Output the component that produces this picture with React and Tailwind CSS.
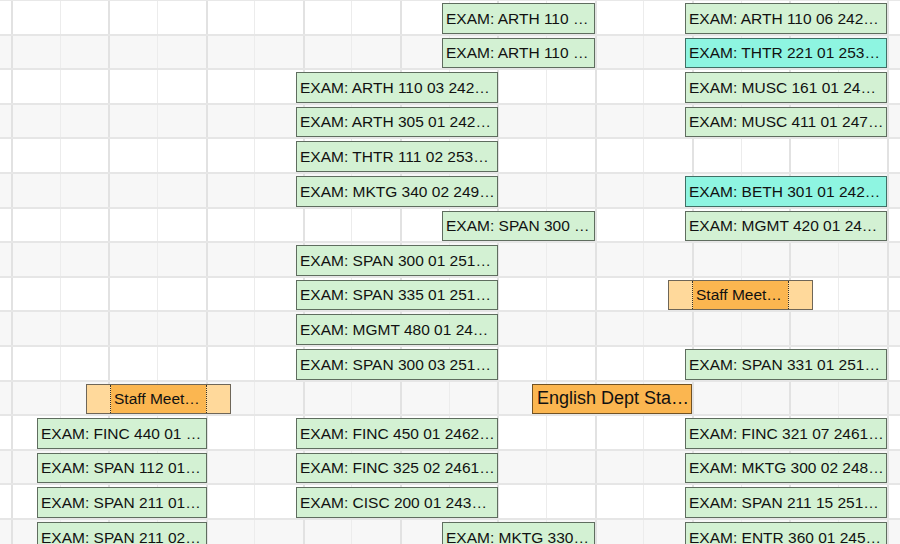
const COLS = 19;

// each row lists its events as [left, right, title, kind]
const rows = [
  [[442, 595, "EXAM: ARTH 110 …", "exam"], [685, 887, "EXAM: ARTH 110 06 242…", "exam"]],
  [[442, 595, "EXAM: ARTH 110 …", "exam"], [685, 887, "EXAM: THTR 221 01 253…", "theatre"]],
  [[296, 498, "EXAM: ARTH 110 03 242…", "exam"], [685, 887, "EXAM: MUSC 161 01 24…", "exam"]],
  [[296, 498, "EXAM: ARTH 305 01 242…", "exam"], [685, 887, "EXAM: MUSC 411 01 247…", "exam"]],
  [[296, 498, "EXAM: THTR 111 02 253…", "exam"]],
  [[296, 498, "EXAM: MKTG 340 02 249…", "exam"], [685, 887, "EXAM: BETH 301 01 242…", "theatre"]],
  [[442, 595, "EXAM: SPAN 300 …", "exam"], [685, 887, "EXAM: MGMT 420 01 24…", "exam"]],
  [[296, 498, "EXAM: SPAN 300 01 251…", "exam"]],
  [[296, 498, "EXAM: SPAN 335 01 251…", "exam"], [668, 813, "Staff Meet…", "meeting"]],
  [[296, 498, "EXAM: MGMT 480 01 24…", "exam"]],
  [[296, 498, "EXAM: SPAN 300 03 251…", "exam"], [685, 887, "EXAM: SPAN 331 01 251…", "exam"]],
  [[86, 231, "Staff Meet…", "meeting"], [532, 692, "English Dept Sta…", "dept"]],
  [[37, 207, "EXAM: FINC 440 01 …", "exam"], [296, 498, "EXAM: FINC 450 01 2462…", "exam"], [685, 887, "EXAM: FINC 321 07 2461…", "exam"]],
  [[37, 207, "EXAM: SPAN 112 01…", "exam"], [296, 498, "EXAM: FINC 325 02 2461…", "exam"], [685, 887, "EXAM: MKTG 300 02 248…", "exam"]],
  [[37, 207, "EXAM: SPAN 211 01…", "exam"], [296, 498, "EXAM: CISC 200 01 243…", "exam"], [685, 887, "EXAM: SPAN 211 15 251…", "exam"]],
  [[37, 207, "EXAM: SPAN 211 02…", "exam"], [442, 595, "EXAM: MKTG 330…", "exam"], [685, 887, "EXAM: ENTR 360 01 245…", "exam"]],
];

const styles = {
  exam: "bg-[#d3f1d3] text-[15.5px] px-[3px]",
  theatre: "bg-[#8ef5e1] text-[15.5px] px-[3px]",
  dept: "bg-[#fbb650] text-[18px] px-[4px]",
};

const EventBox = ({ left, right, title, kind }) => {
  const pos = { left, width: right - left };

  if (kind === "meeting") {
    return (
      <div
        className="absolute top-[2px] h-[30.6px] flex border border-[#6e6658] bg-[#ffd99b] z-10"
        style={pos}
      >
        <div className="w-[24px] shrink-0 border-r border-dotted border-[#3a3325]" />
        <div className="flex-1 min-w-0 bg-[#fbb650] flex items-center pl-[3px] overflow-hidden whitespace-nowrap text-[15.5px] text-[#111]">
          {title}
        </div>
        <div className="w-[24px] shrink-0 border-l border-dotted border-[#3a3325]" />
      </div>
    );
  }

  return (
    <div
      className={`absolute top-[2px] h-[30.6px] flex items-center border border-black/55 overflow-hidden whitespace-nowrap text-[#111] z-10 ${styles[kind]}`}
      style={pos}
    >
      {title}
    </div>
  );
};

const App = () => {
  return (
    <div className="w-[900px] h-[544px] overflow-hidden bg-white font-['Liberation_Sans',Arial,sans-serif] border-t border-[#e8e8e8]">
      {rows.map((events, r) => (
        <div
          key={r}
          className={`relative flex h-[34.6px] border-b-2 border-[#e6e6e6] ${r % 2 ? "bg-[#f7f7f7]" : "bg-white"}`}
        >
          <div className="w-[11px] shrink-0" />
          {Array.from({ length: COLS }).map((_, c) => (
            <div
              key={c}
              className={`w-[48.65px] shrink-0 ${c % 2 ? "border-l border-[#ececec]" : "border-l-2 border-[#e2e2e2]"}`}
            />
          ))}
          {events.map(([left, right, title, kind], i) => (
            <EventBox key={i} left={left} right={right} title={title} kind={kind} />
          ))}
        </div>
      ))}
    </div>
  );
};

export default App;
